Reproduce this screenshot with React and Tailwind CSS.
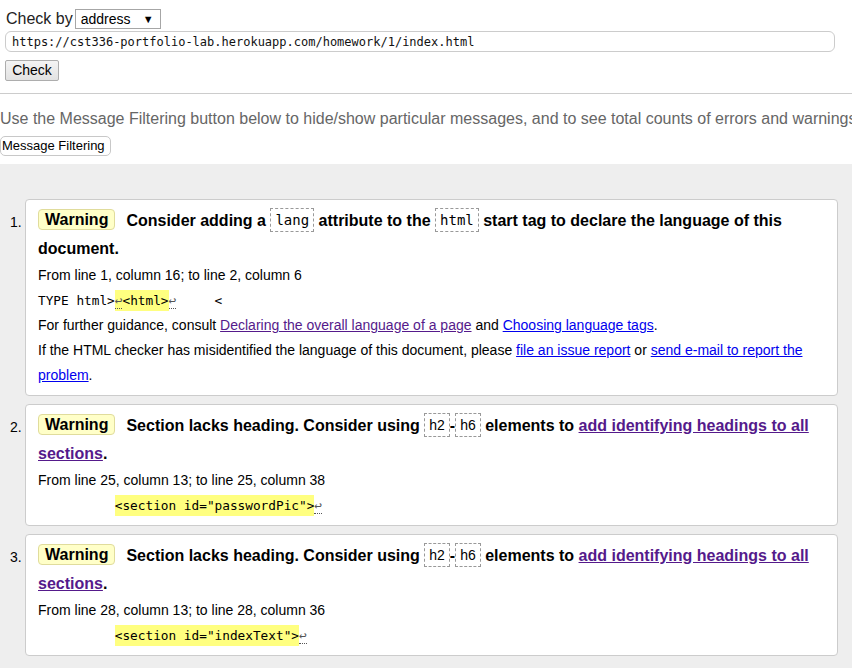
import React from "react";

const sans = { fontFamily: '"Liberation Sans", Arial, sans-serif' };
const mono = { fontFamily: '"DejaVu Sans Mono", "Liberation Mono", monospace' };

function Badge() {
  return (
    <span className="inline-block h-[21px] leading-[19px] px-[6px] mr-[11px] rounded-[4px] border border-[#e0dc9c] bg-[#ffffc8] text-black font-bold text-[16px] align-middle relative top-[-2px]">
      Warning
    </span>
  );
}

function CodeBox({ children, isMono }) {
  return (
    <code
      className="inline-block border border-dashed border-[#999] px-[4px] leading-[20px] h-[24px] pt-[1px] font-normal text-[14px] align-middle relative top-[-2px]"
      style={isMono ? mono : sans}
    >
      {children}
    </code>
  );
}

function Ret() {
  return <span className="border-b border-dotted border-[#555] text-[#555]">↩</span>;
}

function Card({ n, children }) {
  return (
    <div className="flex">
      <div className="w-[25px] pl-[10px] pt-[9px] leading-[28px] text-[14px] text-black shrink-0">{n}.</div>
      <div className="flex-1 mr-[14px] bg-white border border-[#cccccc] rounded-[4px] pl-[12px] pr-[10px] pt-[7px] pb-[7px]">
        {children}
      </div>
    </div>
  );
}

const link = "underline text-[#0000ee]";
const visited = "underline text-[#551a8b]";

export default function App() {
  return (
    <div className="w-[852px] min-h-[668px] overflow-hidden bg-[#eeeeee] flex flex-col" style={sans}>
      <div className="bg-white">
        <div className="flex items-center pl-[6px] pt-[8px] h-[30px]">
          <span className="text-[16px] text-[#222] leading-[20px] mr-[2px]">Check by</span>
          <div className="w-[86px] h-[20px] border border-[#a6a6a6] flex items-center justify-between pl-[5px] pr-[6px] text-[14px] text-black bg-white">
            <span>address</span>
            <span className="text-[11px] leading-none">▼</span>
          </div>
        </div>
        <div className="ml-[5px] mt-[1px] w-[830px] h-[21px] border border-[#cccccc] rounded-[6px] flex items-center pl-[6px] text-[12px] text-[#111]" style={mono}>
          https://cst336-portfolio-lab.herokuapp.com/homework/1/index.html
        </div>
        <div className="ml-[5px] mt-[8px] w-[54px] h-[21px] border border-[#adadad] rounded-[2px] bg-gradient-to-b from-[#f4f4f4] to-[#e2e2e2] flex items-center justify-center text-[14px] text-black">
          Check
        </div>
        <div className="mt-[12px] h-[1px] bg-[#cccccc] w-full"></div>
        <div className="mt-[15px] whitespace-nowrap text-[16px] leading-[20px] text-[#666666]">
          Use the Message Filtering button below to hide/show particular messages, and to see total counts of errors and warnings.
        </div>
        <div className="mt-[7px] mb-[8px] w-[111px] h-[20px] border border-[#c8c8c8] rounded-[5px] bg-white flex items-center pl-[1px] text-[13px] text-black">
          Message Filtering
        </div>
      </div>

      <div className="pt-[35px] flex flex-col gap-[8px] pb-[13px]">
        <Card n={1}>
          <div className="font-bold text-[16px] leading-[28px] text-black">
            <Badge />
            Consider adding a <CodeBox isMono>lang</CodeBox> attribute to the <CodeBox isMono>html</CodeBox> start tag to declare the language of this document.
          </div>
          <div className="text-[14px] leading-[25px] text-black">From line 1, column 16; to line 2, column 6</div>
          <div className="text-[12.75px] leading-[25px] text-black whitespace-pre" style={mono}>
            TYPE html&gt;<span className="bg-[#ffff80] py-[3px]"><Ret />&lt;html&gt;</span><Ret />{"     "}&lt;
          </div>
          <div className="text-[14px] leading-[25px] text-black">
            For further guidance, consult <span className={visited}>Declaring the overall language of a page</span> and <span className={link}>Choosing language tags</span>.
          </div>
          <div className="text-[14px] leading-[25px] text-black">
            If the HTML checker has misidentified the language of this document, please <span className={link}>file an issue report</span> or <span className={link}>send e-mail to report the problem</span>.
          </div>
        </Card>

        <Card n={2}>
          <div className="font-bold text-[16px] leading-[28px] text-black">
            <Badge />
            Section lacks heading. Consider using <CodeBox>h2</CodeBox>-<CodeBox>h6</CodeBox> elements to <span className={visited}>add identifying headings to all sections</span>.
          </div>
          <div className="text-[14px] leading-[25px] text-black">From line 25, column 13; to line 25, column 38</div>
          <div className="text-[12.75px] leading-[25px] text-black whitespace-pre" style={mono}>
            {"          "}<span className="bg-[#ffff80] py-[3px]">&lt;section id="passwordPic"&gt;</span><Ret />
          </div>
        </Card>

        <Card n={3}>
          <div className="font-bold text-[16px] leading-[28px] text-black">
            <Badge />
            Section lacks heading. Consider using <CodeBox>h2</CodeBox>-<CodeBox>h6</CodeBox> elements to <span className={visited}>add identifying headings to all sections</span>.
          </div>
          <div className="text-[14px] leading-[25px] text-black">From line 28, column 13; to line 28, column 36</div>
          <div className="text-[12.75px] leading-[25px] text-black whitespace-pre" style={mono}>
            {"          "}<span className="bg-[#ffff80] py-[3px]">&lt;section id="indexText"&gt;</span><Ret />
          </div>
        </Card>
      </div>
    </div>
  );
}
